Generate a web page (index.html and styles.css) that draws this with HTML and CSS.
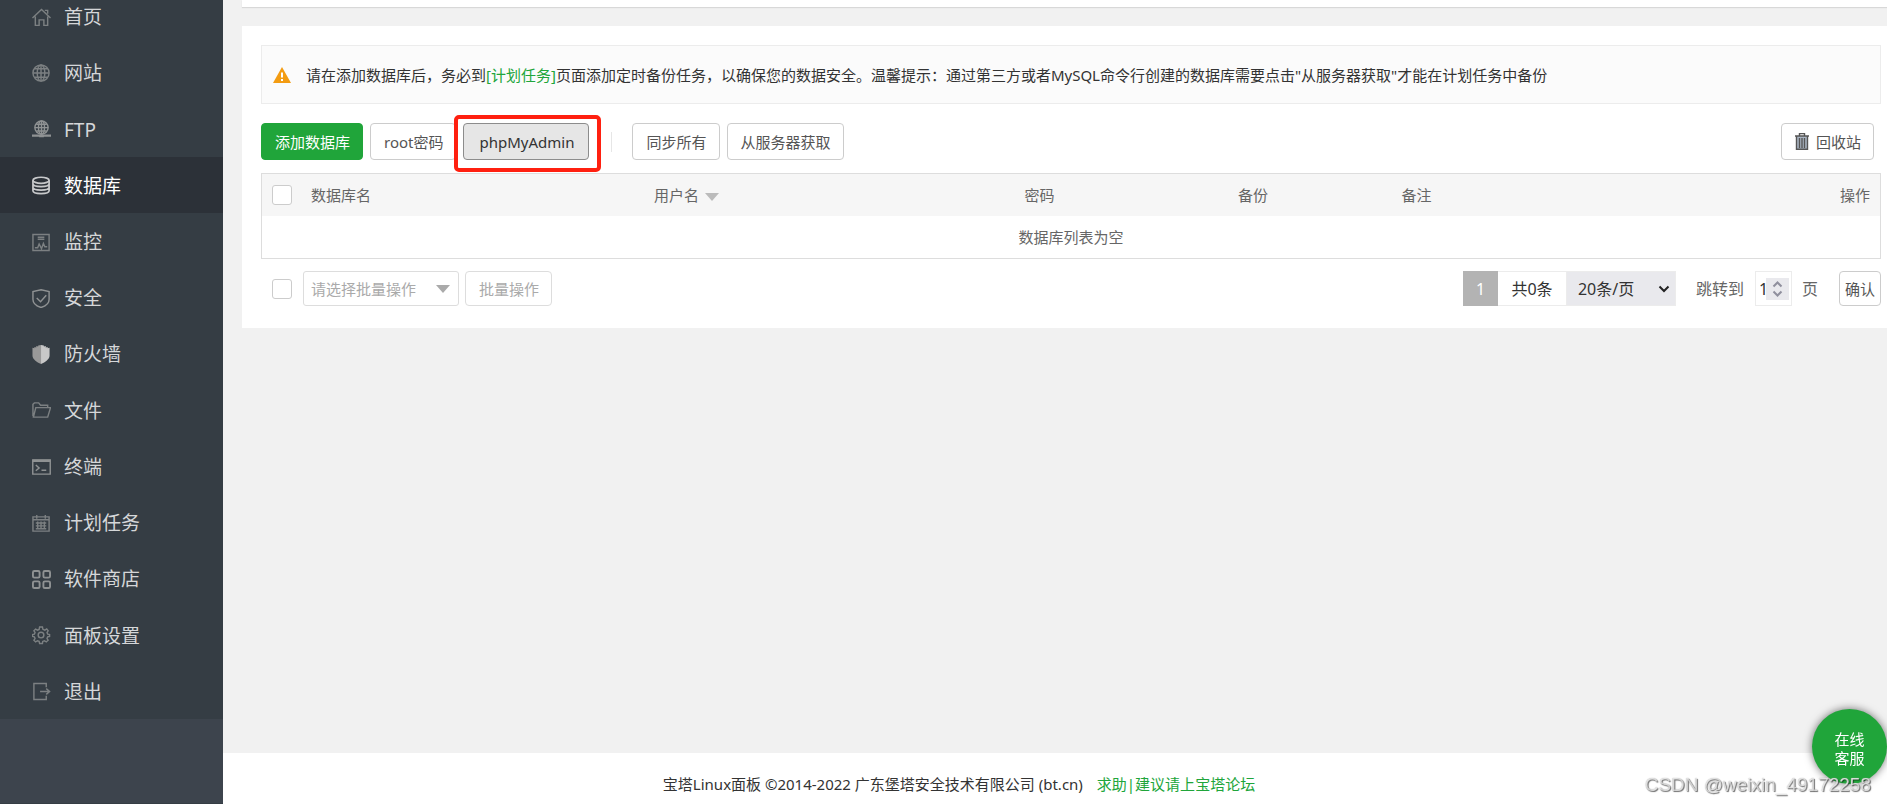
FILE: index.html
```html
<!DOCTYPE html>
<html lang="zh-CN">
<head>
<meta charset="utf-8">
<meta name="viewport" content="width=device-width, initial-scale=1">
<title>宝塔Linux面板</title>
<link rel="stylesheet" href="styles.css">
</head>
<body>
<div class="layout">
  <nav class="sidebar">
    <ul class="menu">
      <li><a href="#"><svg class="icon" viewBox="0 0 20 20"><path d="M.5 10.500 10 1.500l9.500 9M3.500 9v9.300h4V12.500h5v5.800h4V9M13.500 2.500h3v3.500"/></svg>首页</a></li>
      <li><a href="#"><svg class="icon" viewBox="0 0 20 20"><circle cx="9.5" cy="9.5" r="8.5"/><ellipse cx="9.5" cy="9.5" rx="4" ry="8.5"/><path d="M1 9.5h17M9.5 1v17M2.5 5h14M2.5 14h14"/></svg>网站</a></li>
      <li><a href="#"><svg class="icon bright" viewBox="0 0 20 20"><circle cx="10" cy="8" r="7"/><ellipse cx="10" cy="8" rx="3.2" ry="7"/><path d="M3 8h14M10 1v14M4.5 4.5h11M4.5 11.5h11"/><path class="thick" d="M0 16.500h20M7.500 17h5"/></svg>FTP</a></li>
      <li class="active"><a href="#"><svg class="icon white" viewBox="0 0 20 20"><ellipse cx="9.5" cy="4.5" rx="8.500" ry="3.200"/><path d="M1 4.500v11c0 4 17 4 17 0v-11M1 8.200c0 4 17 4 17 0M1 11.900c0 4 17 4 17 0"/></svg>数据库</a></li>
      <li><a href="#"><svg class="icon" viewBox="0 0 20 20"><path d="M1 1.500h17v17H1zM6 4.500h7M6 6.500h7M3 15.500h3l1.500-4 2.500 5 2-5.500 1.500 3.500h2.500"/></svg>监控</a></li>
      <li><a href="#"><svg class="icon bright" viewBox="0 0 20 20"><path d="M9.500 .8 18 2.800V11c0 4-4 7-8.500 8.500C5 18 1 15 1 11V2.800zM5 9.500l4 4 6-7"/></svg>安全</a></li>
      <li><a href="#"><svg class="icon" viewBox="0 0 20 20"><path class="shield-left" d="M9.500 0v20C5 18 .5 15 .5 11V3l2 .5V2l2 .5V1l2 .5V.5z"/><path class="shield-right" d="M9.500 0v20c4.500-2 9-5 9-9V3l-2 .5V2l-2 .5V1l-2 .5V.5z"/></svg>防火墙</a></li>
      <li><a href="#"><svg class="icon" viewBox="0 0 20 20"><path d="M1 16V3.500L2.500 2H7l2 2.500h7.500V7M1.500 17 4 7h15.500l-3 10z"/></svg>文件</a></li>
      <li><a href="#"><svg class="icon bright" viewBox="0 0 20 20"><path d="M.8 3h18.400v15H.8zM4 8.500l3.500 3L4 14.500M10 14h5"/><path class="thick" d="M.5 4h19"/></svg>终端</a></li>
      <li><a href="#"><svg class="icon" viewBox="0 0 20 20"><path d="M1 3h17v15H1zM5 1v4M14 1v4M1 6h17M4 9.500h11M4 12.500h11M4 15.500h11M6 8v8M9.500 8v8M13 8v8"/></svg>计划任务</a></li>
      <li><a href="#"><svg class="icon bright heavy" viewBox="0 0 20 20"><rect x="1" y="1" width="7" height="7" rx="1.500"/><rect x="12" y="1" width="7" height="7" rx="1.500"/><rect x="1" y="12" width="7" height="7" rx="1.500"/><rect x="12" y="12" width="7" height="7" rx="1.500"/></svg>软件商店</a></li>
      <li><a href="#"><svg class="icon" viewBox="0 0 20 20"><circle cx="9.500" cy="9.500" r="3"/><path d="M8 1h3l.5 2.500 2 .8L15.500 3l1.500 2-1.200 2 .7 1.500 2 .5v2l-2 .5-.7 1.700L17 15l-2 1.800-2-1.300-1.700.7L11 18.500H8l-.5-2.300-1.700-.7-2 1.300L2 15l1.200-1.800-.7-1.700-2-.5V9l2-.5.700-1.700L2 5l1.800-1.800 2 1.200 1.700-.8z"/></svg>面板设置</a></li>
      <li><a href="#"><svg class="icon" viewBox="0 0 20 20"><path d="M15 5.500V1.500H2v17h13V14.500M8.500 10H18M15 7l3.500 3-3.500 3"/></svg>退出</a></li>
    </ul>
  </nav>
  <div class="page">
    <div class="topbar"></div>
    <main class="card">
      <div class="notice">
        <svg class="warn" viewBox="0 0 18 16"><path class="warn-shape" d="M9 0l9 16H0z"/><path class="warn-mark" d="M8 5.500h2v5H8zM8 12h2v2H8z"/></svg>
        <p>请在添加数据库后，务必到<a href="#">[计划任务]</a>页面添加定时备份任务，以确保您的数据安全。温馨提示：通过第三方或者MySQL命令行创建的数据库需要点击"从服务器获取"才能在计划任务中备份</p>
      </div>
      <div class="toolbar">
        <button class="btn primary">添加数据库</button>
        <button class="btn">root密码</button>
        <span class="marked"><button class="btn pressed">phpMyAdmin</button></span>
        <span class="divider"></span>
        <button class="btn">同步所有</button>
        <button class="btn">从服务器获取</button>
        <button class="btn recycle"><svg class="trash" viewBox="0 0 14 17"><path class="bin" d="M1.500 3h11v13.200h-11z"/><path d="M0 3h14M4.500 2.500v-2h5v2M1.500 3v13.200h11V3M4.500 5v10M7 5v10M9.500 5v10"/></svg>回收站</button>
      </div>
      <table class="grid">
        <colgroup><col class="c-check"><col class="c-name"><col class="c-user"><col class="c-pass"><col class="c-backup"><col></colgroup>
        <thead><tr>
          <th><input class="check" type="checkbox" aria-label="全选"></th>
          <th>数据库名</th>
          <th>用户名<svg class="sort" viewBox="0 0 14 8"><path d="M0 0h14L7 8z"/></svg></th>
          <th>密码</th>
          <th>备份</th>
          <th><div class="split"><span>备注</span><span>操作</span></div></th>
        </tr></thead>
        <tbody><tr><td colspan="6">数据库列表为空</td></tr></tbody>
      </table>
      <div class="bottom">
        <input class="check" type="checkbox" aria-label="选择全部">
        <div class="select batch"><select aria-label="批量操作类型"><option>请选择批量操作</option></select><svg class="caret" viewBox="0 0 14 8"><path d="M0 0h14L7 8z"/></svg></div>
        <button class="btn disabled">批量操作</button>
        <div class="pager">
          <span class="current">1</span>
          <span class="total">共0条</span>
          <div class="select size"><select aria-label="每页条数"><option>20条/页</option></select><svg class="chevron" viewBox="0 0 12 8"><path d="M1.500 1.500 6 6l4.500-4.500"/></svg></div>
          <label class="jump" for="page-no">跳转到</label>
          <span class="number"><input id="page-no" type="number" value="1"><svg class="spin" viewBox="0 0 23 22"><path d="M7.500 8.500l4-4 4 4M7.500 13.500l4 4 4-4"/></svg></span>
          <span class="unit">页</span>
          <button class="btn confirm">确认</button>
        </div>
      </div>
    </main>
    <footer class="footer"><span>宝塔Linux面板 ©2014-2022 广东堡塔安全技术有限公司 (bt.cn)</span><a href="#">求助|建议请上宝塔论坛</a></footer>
  </div>
</div>
<button class="service"><span>在线</span><span>客服</span></button>
<div class="watermark">CSDN @weixin_49172258</div>
</body>
</html>
```
FILE: styles.css
```css
* { box-sizing: border-box; }
body {
  margin: 0;
  background: #f1f1f1;
  color: #333;
  font: 15px/20px "Noto Sans", "Noto Sans CJK SC", sans-serif;
}
a { color: #20a53a; text-decoration: none; }
button, input, select { font: inherit; color: inherit; margin: 0; }
.layout { display: flex; min-height: 100vh; overflow: hidden; }

.sidebar {
  flex: 0 0 223px;
  background: #3d444d;
  border-bottom: 1px solid #353d44;
}
.menu {
  display: grid;
  grid-auto-rows: 1fr;
  height: 731px;
  margin: -12px 0 0;
  padding: 0;
  list-style: none;
  background: #353d44;
}
.menu a {
  display: flex;
  align-items: center;
  gap: 13px;
  height: 100%;
  padding: 2px 0 0 32px;
  color: #d5d7d9;
  font-size: 19px;
}
.menu .active { background: #2c3138; }
.menu .active a { color: #fff; }
.icon {
  width: 19px;
  height: 19px;
  fill: none;
  stroke: #7c8082;
  stroke-width: 1.5;
}
.icon.bright { stroke: #8f9293; }
.icon.heavy { stroke-width: 2; }
.icon.white { stroke: #c8c9cb; stroke-width: 1.8; }
.icon .thick { stroke-width: 2.5; }
.shield-left { fill: #999; stroke: none; }
.shield-right { fill: #c8c8c8; stroke: none; }

.page { flex: 1; min-width: 0; display: flex; flex-direction: column; }
.topbar {
  height: 7px;
  margin-left: 19px;
  background: #fff;
  box-shadow: 0 1px 1px #d8d8d8;
}
.card { margin: 19px 0 0 19px; padding: 19px 6px 22px 19px; background: #fff; }
.notice {
  display: flex;
  align-items: center;
  gap: 15px;
  min-height: 59px;
  padding: 0 11px;
  background: #fbfbfb;
  border: 1px solid #ececec;
}
.notice p { margin: 0; white-space: nowrap; }
.warn { width: 18px; height: 16px; flex: none; }
.warn-shape { fill: #f39c12; }
.warn-mark { fill: #fff; }

.toolbar { display: flex; align-items: center; gap: 7px; margin: 19px 0 13px; padding-right: 7px; }
.btn {
  height: 37px;
  padding: 0 12px 0 13px;
  background: #fff;
  border: 1px solid #ccc;
  border-radius: 4px;
  color: #555;
  white-space: nowrap;
}
.primary { background: #20a53a; border-color: #20a53a; color: #fff; }
.pressed { min-width: 126px; background: #e6e6e6; border-color: #8c8c8c; color: #333; }
.marked { position: relative; }
.marked::after {
  content: "";
  position: absolute;
  inset: -8px -12px -12px -9px;
  border: 4px solid #ff2010;
  border-radius: 5px;
  pointer-events: none;
}
.divider { width: 1px; height: 20px; margin: 0 13px 0 15px; background: #e6e6e6; }
.recycle { display: flex; align-items: center; gap: 7px; margin-left: auto; }
.trash { width: 14px; height: 17px; fill: none; stroke: #555; stroke-width: 1.4; }
.trash .bin { fill: #a9b4c2; stroke: none; }

.grid {
  width: 100%;
  table-layout: fixed;
  border-spacing: 0;
  border: 1px solid #ddd;
  color: #666;
}
.grid th { height: 42px; padding: 0 10px; background: #f6f6f6; font-weight: 400; text-align: left; }
.grid td { height: 42px; padding: 0; text-align: center; }
.c-check { width: 39px; }
.c-name { width: 21.2%; }
.c-user { width: 22.9%; }
.c-pass { width: 13.2%; }
.c-backup { width: 10.1%; }
.split { display: flex; justify-content: space-between; }
.sort { width: 14px; height: 8px; margin-left: 6px; fill: #bbb; }
.check {
  appearance: none;
  display: block;
  flex: none;
  width: 20px;
  height: 20px;
  background: #fff;
  border: 1px solid #ccc;
  border-radius: 3px;
}

.bottom { display: flex; align-items: center; gap: 6px; margin-top: 12px; padding-left: 11px; }
.bottom .btn { height: 35px; }
.bottom .disabled { color: #aaa; border-color: #ddd; }
.select { position: relative; height: 35px; }
.select select { appearance: none; width: 100%; height: 100%; border-radius: 0; outline: 0; }
.batch { width: 156px; margin-left: 5px; color: #aaa; }
.batch select { padding: 0 7px; background: #fff; border: 1px solid #ddd; border-radius: 3px; }
.caret, .chevron { position: absolute; pointer-events: none; }
.caret { right: 9px; top: 14px; width: 14px; height: 8px; fill: #aaa; }
.pager { display: flex; align-items: center; margin-left: auto; font-size: 16px; }
.current, .total { height: 35px; line-height: 36px; text-align: center; }
.current { width: 35px; background: #b3b3b3; color: #fff; }
.total { width: 68px; border: 1px solid #ececec; border-width: 1px 0; line-height: 35px; }
.size { width: 110px; }
.size select { padding: 0 11px; background: #e9e9ed; border: 1px solid #ececec; }
.chevron { right: 6px; top: 14px; width: 12px; height: 8px; fill: none; stroke: #222; stroke-width: 2; }
.jump { margin: 0 11px 0 20px; color: #666; }
.number { display: flex; align-items: center; width: 37px; height: 35px; padding: 0 2px 0 3px; border: 1px solid #ececec; }
.number input { appearance: textfield; min-width: 0; width: 100%; height: 30px; padding: 0; border: 0; outline: 0; }
.number input::-webkit-inner-spin-button { appearance: none; margin: 0; }
.spin { flex: none; width: 23px; height: 22px; background: #e9e9ed; fill: none; stroke: #8f8f9d; stroke-width: 2; }
.unit { margin: 0 21px 0 10px; color: #666; }
.bottom .confirm { padding: 0 5px; font-size: 15px; }

.footer {
  display: flex;
  justify-content: center;
  align-items: center;
  gap: 14px;
  height: 51px;
  margin-top: auto;
  padding: 10px 192px 0 0;
  background: #fff;
}
.service {
  position: fixed;
  right: 0;
  bottom: 20px;
  display: flex;
  flex-direction: column;
  align-items: center;
  justify-content: center;
  width: 75px;
  height: 75px;
  padding: 5px 0 0;
  border: 0;
  border-radius: 50%;
  background: #20a53a;
  box-shadow: 0 0 8px rgba(0, 0, 0, .55);
  color: #fff;
  line-height: 19px;
}
.watermark {
  position: fixed;
  right: 16px;
  bottom: 8px;
  color: rgba(255, 255, 255, .7);
  font: 19px/22px "Liberation Sans", Arial, sans-serif;
  text-shadow: 1px 1px 1px rgba(0, 0, 0, .55), 0 0 1px #999;
}
```
